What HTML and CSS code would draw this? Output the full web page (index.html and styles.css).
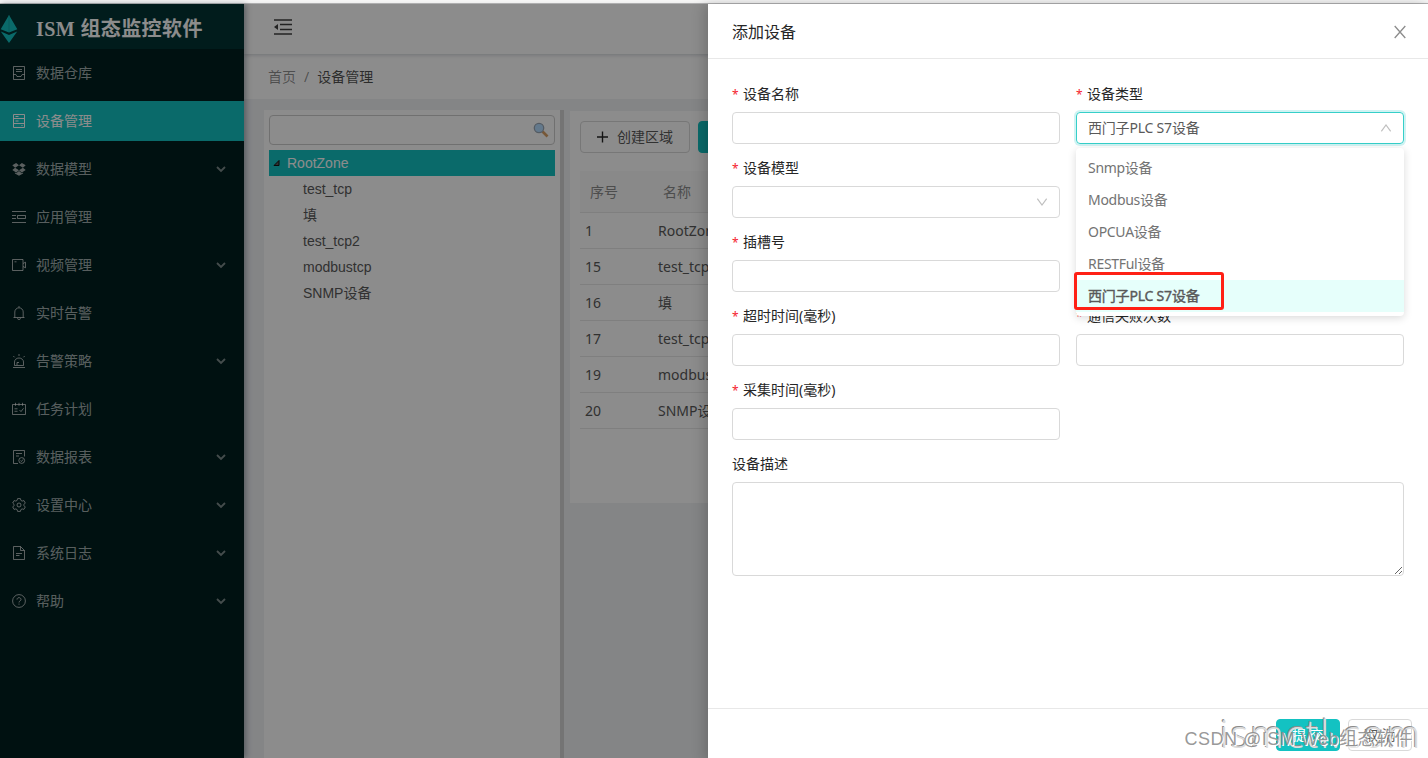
FILE: index.html
```html
<!DOCTYPE html>
<html lang="zh-CN">
<head>
    <meta charset="UTF-8">
    <meta name="viewport" content="width=device-width, initial-scale=1.0">
    <title>ISM 组态监控软件</title>
    <link rel="stylesheet" href="styles.css">
</head>
<body>
    <div class="top-strip"></div>
    <div class="layout">
        <aside class="sider">
            <div class="logo">
                <svg class="logo-icon" width="18" height="28" viewBox="0 0 18 28"><path fill="#13c2c2" d="M9 0 17.300 14.200 9 17.600.7 14.200zM.8 16.500 9 20l8.200-3.500L9 28z"/><path stroke="#0d8f90" d="M9 0v17" fill="none" opacity=".5"/></svg>
                <h1>ISM 组态监控软件</h1>
            </div>
            <ul class="menu">
                <li class="menu-item">
                    <svg class="icon" viewBox="0 0 14 14"><path d="M1.500.5h11v13h-11zM4 3.500h6M4 5.500h6M1.500 8.500h2.300L5 10.500h4l1.200-2h2.300"/></svg>
                    <span>数据仓库</span>
                </li>
                <li class="menu-item active">
                    <svg class="icon" viewBox="0 0 14 14"><path d="M1.500.5h11v13h-11zM1.500 4.500h11M1.500 9.500h11M3.500 2.500h3M3.500 7h3M9.500 11.500h1"/></svg>
                    <span>设备管理</span>
                </li>
                <li class="menu-item">
                    <svg class="icon solid" viewBox="0 0 14 14"><path d="M4.100.9 7 3.200 3.100 5.700.3 3.300zM9.900.9l3.800 2.400-2.800 2.400L7 3.200zM.3 8l2.800-2.300L7 8.200l-2.900 2.200zM13.700 8l-2.800-2.300L7 8.200l2.900 2.200zM7 8.900l2.900 2.300 1.200-.8v1L7 13.700l-4.100-2.300v-1l1.200.8z"/></svg>
                    <span>数据模型</span>
                    <svg class="arrow" viewBox="0 0 10 8"><path d="M1 2l4 4 4-4"/></svg>
                </li>
                <li class="menu-item">
                    <svg class="icon" viewBox="0 0 14 14"><path d="M0 1.500h14M0 12.500h14M0 5.500h4M0 8.500h4M5.500 5.500h8v3h-8z"/></svg>
                    <span>应用管理</span>
                </li>
                <li class="menu-item">
                    <svg class="icon" viewBox="0 0 14 14"><path d="M.5 1.500H11v11H.5zM11 5.500l2.500-1.300v5.600L11 8.500M2.500 3.800h2"/></svg>
                    <span>视频管理</span>
                    <svg class="arrow" viewBox="0 0 10 8"><path d="M1 2l4 4 4-4"/></svg>
                </li>
                <li class="menu-item">
                    <svg class="icon" viewBox="0 0 14 14"><path d="M7 0v1.500M1.500 11.500h11M2.800 11.500V6a4.200 4.200 0 0 1 8.400 0v5.500M5.500 12.200a1.500 1.300 0 0 0 3 0"/></svg>
                    <span>实时告警</span>
                </li>
                <li class="menu-item">
                    <svg class="icon" viewBox="0 0 14 14"><path d="M7 0v2M1.300 2l1.300 1.300M12.700 2l-1.300 1.300M1 13.500h12M2.500 11.500V8a4.500 4 0 0 1 9 0v3.500zM5 11V8.500h2"/></svg>
                    <span>告警策略</span>
                    <svg class="arrow" viewBox="0 0 10 8"><path d="M1 2l4 4 4-4"/></svg>
                </li>
                <li class="menu-item">
                    <svg class="icon" viewBox="0 0 14 14"><path d="M.5 2.500h13v10H.5zM3.500.8v3M7 .8v3M10.500.8v3M2.500 6.800h3M2.500 9.300h3M7.500 8l1.500 1.600 2.500-3.300"/></svg>
                    <span>任务计划</span>
                </li>
                <li class="menu-item">
                    <svg class="icon" viewBox="0 0 14 14"><path d="M6 13.500H1.500V.5h11v6M4 3.500h6M4 6h3"/><circle cx="9.700" cy="10.500" r="2.900"/><path d="M8.400 10.500l1 1 1.600-2"/></svg>
                    <span>数据报表</span>
                    <svg class="arrow" viewBox="0 0 10 8"><path d="M1 2l4 4 4-4"/></svg>
                </li>
                <li class="menu-item">
                    <svg class="icon" viewBox="0 0 14 14"><path d="M5.600.6h2.800l.5 1.800 1.200.7 1.800-.5 1.400 2.400L12 6.300v1.400l1.300 1.300-1.400 2.400-1.800-.5-1.200.7-.5 1.800H5.600l-.5-1.800-1.200-.7-1.800.5L.7 9 2 7.700V6.300L.7 5l1.400-2.400 1.800.5 1.200-.7z"/><circle cx="7" cy="7" r="2"/></svg>
                    <span>设置中心</span>
                    <svg class="arrow" viewBox="0 0 10 8"><path d="M1 2l4 4 4-4"/></svg>
                </li>
                <li class="menu-item">
                    <svg class="icon" viewBox="0 0 14 14"><path d="M1.500.5h7l4 4v9h-11zM8.500.5v4h4M4 7.500h6M4 9.500h3.500"/></svg>
                    <span>系统日志</span>
                    <svg class="arrow" viewBox="0 0 10 8"><path d="M1 2l4 4 4-4"/></svg>
                </li>
                <li class="menu-item">
                    <svg class="icon" viewBox="0 0 14 14"><circle cx="7" cy="7" r="6.400"/><path d="M5 5.600c0-2.700 4-2.500 4-.1C9 7 7 6.800 7 8.500M7 9.600v1.100"/></svg>
                    <span>帮助</span>
                    <svg class="arrow" viewBox="0 0 10 8"><path d="M1 2l4 4 4-4"/></svg>
                </li>
            </ul>
        </aside>

        <main class="main">
            <header class="header">
                <svg width="18" height="16" viewBox="0 0 18 16"><path d="M0 1h18M6 5.500h12M6 10.500h12M0 15h18" stroke="#404040" stroke-width="1.600"/><path d="M0 8l4-3v6z" fill="#404040"/></svg>
            </header>
            <div class="breadcrumb">
                <span>首页</span><span class="sep">/</span><span class="current">设备管理</span>
            </div>
            <div class="content">
                <section class="tree-panel">
                    <div class="tree-search">
                        <svg width="16" height="16" viewBox="0 0 16 16"><path d="M9.500 9.500l5 5" stroke="#d9a066" stroke-width="2.600"/><circle cx="6" cy="6" r="4.700" fill="#b5dcff" stroke="#9aa7b5" stroke-width="1.300"/></svg>
                    </div>
                    <ul class="tree">
                        <li class="tree-root"><svg width="8" height="8" viewBox="0 0 8 8"><path d="M1 6.500h5V1.500z" fill="#595959" stroke="#111"/></svg>RootZone</li>
                        <li>test_tcp</li>
                        <li>填</li>
                        <li>test_tcp2</li>
                        <li>modbustcp</li>
                        <li>SNMP设备</li>
                    </ul>
                </section>
                <div class="splitter"></div>
                <section class="table-panel">
                    <div class="toolbar">
                        <button class="btn btn-add"><svg width="12" height="12" viewBox="0 0 12 12"><path d="M6 0v12M0 6h12" stroke="#262626" stroke-width="1.500"/></svg>创建区域</button>
                        <button class="btn btn-primary btn-device">创建设备</button>
                    </div>
                    <table class="table">
                        <thead>
                            <tr><th class="col-id">序号</th><th>名称</th></tr>
                        </thead>
                        <tbody>
                            <tr><td>1</td><td>RootZone</td></tr>
                            <tr><td>15</td><td>test_tcp</td></tr>
                            <tr><td>16</td><td>填</td></tr>
                            <tr><td>17</td><td>test_tcp2</td></tr>
                            <tr><td>19</td><td>modbustcp</td></tr>
                            <tr><td>20</td><td>SNMP设备</td></tr>
                        </tbody>
                    </table>
                </section>
            </div>
        </main>
    </div>

    <div class="mask"></div>

    <div class="drawer">
        <div class="drawer-header">
            <span>添加设备</span>
            <svg width="12" height="14" viewBox="0 0 12 14"><path d="M.7 1l10.600 12M11.300 1L.7 13" stroke="#8c8c8c" stroke-width="1.300"/></svg>
        </div>
        <form class="drawer-body">
            <div class="field">
                <label class="required">设备名称</label>
                <div class="input"></div>
            </div>
            <div class="field">
                <label class="required">设备类型</label>
                <div class="input select focused">
                    <span>西门子PLC S7设备</span>
                    <svg width="10" height="8" viewBox="0 0 10 8"><path d="M.3 7.300L5 1l4.700 6.300"/></svg>
                    <ul class="dropdown">
                        <li>Snmp设备</li>
                        <li>Modbus设备</li>
                        <li>OPCUA设备</li>
                        <li>RESTFul设备</li>
                        <li class="selected">西门子PLC S7设备</li>
                        <li class="marker"></li>
                    </ul>
                </div>
            </div>
            <div class="field left">
                <label class="required">设备模型</label>
                <div class="input select">
                    <svg width="10" height="8" viewBox="0 0 10 8"><path d="M.3.700L5 7 9.700.7"/></svg>
                </div>
            </div>
            <div class="field left">
                <label class="required">插槽号</label>
                <div class="input"></div>
            </div>
            <div class="field left">
                <label class="required">超时时间(毫秒)</label>
                <div class="input"></div>
            </div>
            <div class="field">
                <label class="required">通信失败次数</label>
                <div class="input"></div>
            </div>
            <div class="field left">
                <label class="required">采集时间(毫秒)</label>
                <div class="input"></div>
            </div>
            <div class="field full">
                <label>设备描述</label>
                <textarea></textarea>
            </div>
        </form>
        <div class="drawer-footer">
            <button class="btn btn-primary" type="button">提 交</button>
            <button class="btn" type="button">取 消</button>
        </div>
    </div>

    <div class="watermark site">ismctl.com</div>
    <div class="watermark author">CSDN @ISM Web组态软件</div>
</body>
</html>
```
FILE: styles.css
```css
* {
    box-sizing: border-box;
}
body {
    margin: 0;
    height: 758px;
    overflow: hidden;
    position: relative;
    font-family: "Noto Sans", "Noto Sans CJK SC", sans-serif;
    font-size: 14px;
    line-height: 22px;
    color: #595959;
}
ul {
    list-style: none;
    margin: 0;
    padding: 0;
}
.top-strip {
    height: 4px;
    background: #f5f5f5;
    border-bottom: 1px solid #b8b8b8;
}
.layout {
    display: flex;
    height: 754px;
    background: #f0f2f5;
}

/* sidebar */
.sider {
    width: 244px;
    flex: none;
    background: #001f1f;
    box-shadow: 2px 0 6px rgba(0, 21, 41, 0.35);
    z-index: 2;
}
.logo {
    display: flex;
    align-items: center;
    gap: 18px;
    height: 45px;
    background: #033434;
}
.logo-icon {
    margin-top: 5px;
}
.logo h1 {
    margin: 5px 0 0;
    font: bold 20px/30px "Liberation Serif", "Noto Sans CJK SC", serif;
    letter-spacing: 0.4px;
    color: #fff;
    white-space: nowrap;
}
.menu {
    padding-top: 4px;
}
.menu-item {
    display: flex;
    align-items: center;
    height: 40px;
    margin-bottom: 8px;
    padding: 0 18px 0 12px;
    color: rgba(255, 255, 255, 0.65);
}
.menu-item.active {
    background: #13c2c2;
    color: #fff;
}
.icon {
    width: 14px;
    height: 14px;
    margin-right: 10px;
    fill: none;
    stroke: currentColor;
    stroke-width: 1;
}
.icon.solid {
    fill: currentColor;
    stroke: none;
}
.arrow {
    width: 10px;
    height: 8px;
    margin-left: auto;
    fill: none;
    stroke: currentColor;
    stroke-width: 1.8;
    opacity: 0.75;
}

/* main area */
.main {
    flex: 1;
    min-width: 0;
    display: flex;
    flex-direction: column;
}
.header {
    height: 50px;
    padding: 15px 30px;
    background: #fff;
    box-shadow: 0 1px 4px rgba(0, 21, 41, 0.2);
    z-index: 1;
}
.header svg {
    display: block;
}
.breadcrumb {
    height: 45px;
    padding: 12px 24px;
    background: #fff;
    color: rgba(0, 0, 0, 0.45);
}
.breadcrumb .sep {
    margin: 0 8px;
}
.breadcrumb .current {
    color: rgba(0, 0, 0, 0.7);
}
.content {
    flex: 1;
    display: flex;
    padding: 11px 0 0 20px;
}
.tree-panel {
    width: 296px;
    flex: none;
    padding: 5px;
    background: #fff;
    font-family: "Liberation Sans", "Noto Sans CJK SC", sans-serif;
}
.tree-search {
    display: flex;
    align-items: center;
    justify-content: flex-end;
    height: 30px;
    margin-bottom: 5px;
    padding-right: 5px;
    border: 1px solid #ccc;
    border-radius: 4px;
}
.tree li {
    height: 26px;
    line-height: 26px;
    padding-left: 34px;
}
.tree .tree-root {
    display: flex;
    align-items: center;
    gap: 6px;
    padding-left: 4px;
    background: #13c2c2;
    color: #fff;
}
.splitter {
    width: 4px;
    margin-right: 6px;
    background: #d4d4d4;
}
.table-panel {
    flex: 1;
    height: 392px;
    margin-top: 1px;
    padding: 10px;
    background: #fff;
    overflow: hidden;
}
.toolbar {
    display: flex;
    gap: 8px;
    margin-bottom: 18px;
}
.btn {
    height: 32px;
    padding: 0 15px;
    border: 1px solid #d9d9d9;
    border-radius: 4px;
    background: #fff;
    color: #595959;
    font: inherit;
    white-space: nowrap;
}
.btn-primary {
    background: #13c2c2;
    border-color: #13c2c2;
    color: #fff;
}
.btn-add {
    display: flex;
    align-items: center;
    gap: 9px;
    width: 110px;
    padding: 0 16px;
}
.table {
    width: 100%;
    border-collapse: separate;
    border-spacing: 0;
    table-layout: fixed;
}
.table th {
    height: 42px;
    padding: 0 10px;
    background: #fafafa;
    border-bottom: 1px solid #e8e8e8;
    color: #8c8c8c;
    font-weight: normal;
    text-align: left;
}
.table .col-id {
    width: 73px;
}
.table td {
    height: 36px;
    padding: 0 5px;
    border-bottom: 1px solid #e8e8e8;
}

/* drawer */
.mask {
    position: absolute;
    top: 4px;
    left: 0;
    right: 0;
    bottom: 0;
    background: rgba(0, 0, 0, 0.45);
    z-index: 10;
}
.drawer {
    position: absolute;
    top: 4px;
    right: 0;
    width: 720px;
    height: 758px;
    display: flex;
    flex-direction: column;
    background: #fff;
    box-shadow: -4px 0 12px rgba(0, 0, 0, 0.18);
    z-index: 11;
}
.drawer-header {
    display: flex;
    align-items: center;
    justify-content: space-between;
    height: 55px;
    padding: 2px 22px 0 24px;
    border-bottom: 1px solid #e8e8e8;
    color: #262626;
    font-size: 16px;
}
.drawer-body {
    flex: 1;
    display: grid;
    grid-template-columns: 1fr 1fr;
    align-content: start;
    gap: 13px 16px;
    padding: 24px;
}
.field {
    display: flex;
    flex-direction: column;
    gap: 7px;
}
.field.left {
    grid-column: 1;
}
.field.full {
    grid-column: 1 / 3;
}
.field label {
    height: 22px;
    color: #262626;
}
.field .required::before {
    content: "*";
    display: inline-block;
    width: 11px;
    color: #f5222d;
    font-size: 12px;
    line-height: 1;
}
.input {
    display: flex;
    align-items: center;
    height: 32px;
    padding: 0 11px;
    border: 1px solid #d9d9d9;
    border-radius: 4px;
    letter-spacing: -0.2px;
}
.select {
    position: relative;
}
.select svg {
    margin-left: auto;
    margin-right: 1px;
    fill: none;
    stroke: #bfbfbf;
    stroke-width: 1.2;
}
.select.focused {
    border-color: #36cfc9;
    box-shadow: 0 0 0 2px rgba(19, 194, 194, 0.2);
}
.dropdown {
    position: absolute;
    top: 35px;
    left: -1px;
    width: 328px;
    padding: 4px 0;
    background: #fff;
    border-radius: 4px;
    box-shadow: 0 2px 8px rgba(0, 0, 0, 0.15);
    letter-spacing: -0.3px;
    z-index: 3;
}
.dropdown li {
    height: 32px;
    padding: 5px 12px;
    color: #737373;
}
.dropdown .selected {
    background: #e6fffb;
    color: #595959;
    letter-spacing: -0.2px;
    -webkit-text-stroke: 0.4px #595959;
}
/* red frame round the chosen option */
.dropdown .marker {
    position: absolute;
    left: -2px;
    top: 124px;
    width: 150px;
    height: 38px;
    border: 3px solid #ff2015;
    border-radius: 3px;
}
textarea {
    display: block;
    width: 100%;
    height: 94px;
    border: 1px solid #d9d9d9;
    border-radius: 4px;
    resize: vertical;
}
.drawer-footer {
    display: flex;
    justify-content: flex-end;
    gap: 8px;
    height: 54px;
    padding: 10px 16px;
    border-top: 1px solid #e8e8e8;
}
.drawer-footer .btn {
    width: 64px;
}

.watermark {
    position: absolute;
    white-space: nowrap;
    z-index: 20;
}
.site {
    top: 709px;
    right: 6px;
    font: 300 38px/48px "Open Sans", sans-serif;
    letter-spacing: 2px;
    color: #dcdcdc;
    text-shadow: -1px -1px 0 #8c8c8c;
}
.author {
    top: 727px;
    right: 15px;
    font: 18px/24px "Liberation Sans", "Noto Sans CJK SC", sans-serif;
    letter-spacing: 0.5px;
    color: rgba(140, 140, 140, 0.9);
    text-shadow: 1px 1px 0 #fff;
}
```
